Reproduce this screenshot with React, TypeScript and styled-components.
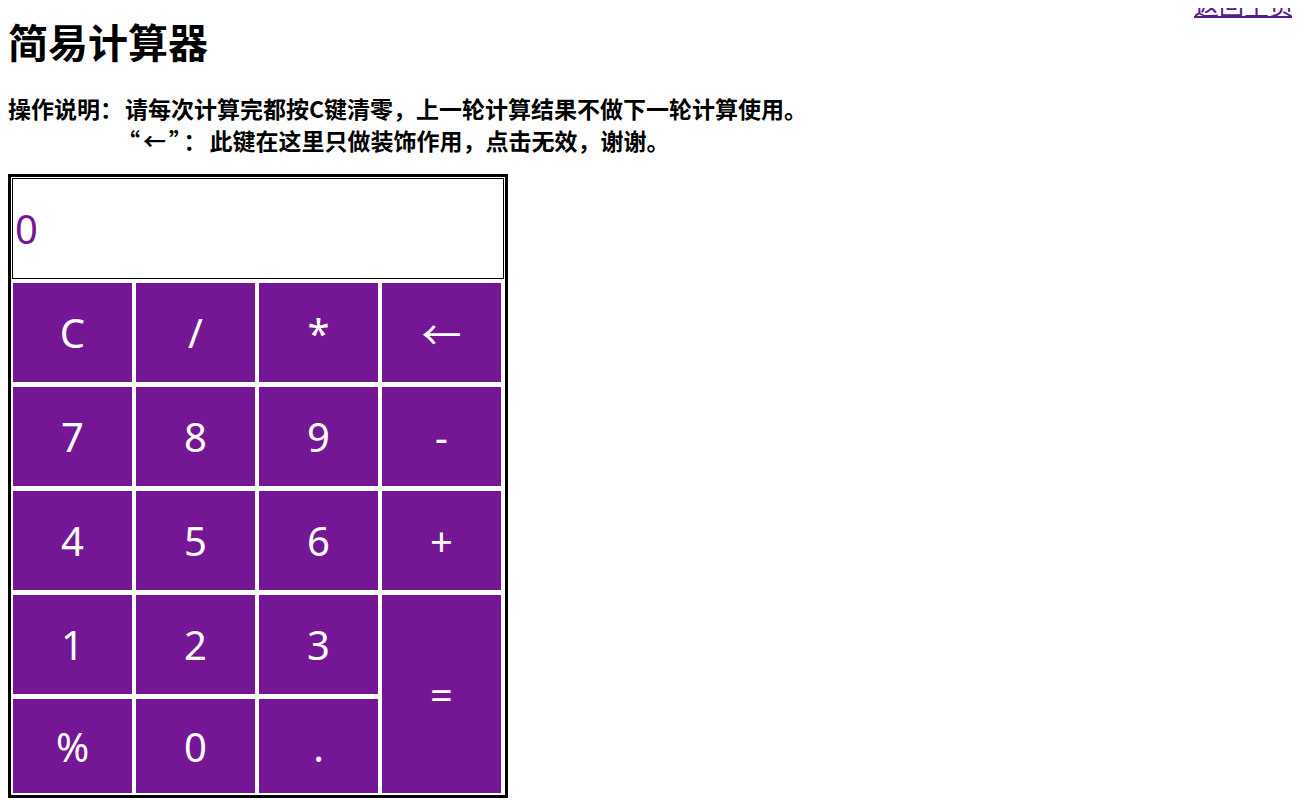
import React from "react";
import styled, { createGlobalStyle } from "styled-components";

const GlobalStyle = createGlobalStyle`
  body {
    margin: 8px;
    font-family: "Noto Sans", "Noto Sans CJK SC", sans-serif;
    background: #ffffff;
    color: #000000;
  }
`;

const purple = "#751795";

const TopBar = styled.div`
  display: flex;
  justify-content: flex-end;
  height: 0;
`;

const HomeLink = styled.a`
  margin-top: -16px;
  margin-right: -2px;
  font-size: 25px;
  line-height: 25px;
  color: #551a8b;
  text-decoration: underline;
  text-underline-offset: 1px;
  font-family: "Noto Sans CJK SC", sans-serif;
`;

const Title = styled.h1`
  margin: 13px 0 0;
  font-size: 40px;
  line-height: 40px;
  font-weight: 700;
  font-family: "Noto Sans CJK SC", sans-serif;
`;

const Notes = styled.div`
  display: flex;
  margin-top: 31px;
  font-size: 23px;
  line-height: 32px;
  font-weight: 700;
  font-family: "Noto Sans CJK SC", sans-serif;
`;

const NoteLabel = styled.div`
  width: 117px;
  flex: none;
`;

const NoteLines = styled.div`
  display: flex;
  flex-direction: column;
`;

const Quote = styled.span`
  margin-left: -8px;
  letter-spacing: 3px;
`;

const Calculator = styled.div`
  margin-top: 18px;
  width: 494px;
  border: 3px solid #000;
  padding: 1px 0 2px 0;
`;

const Display = styled.div`
  box-sizing: border-box;
  width: 492px;
  margin-left: 1px;
  height: 101px;
  border: 1px solid #000;
  display: flex;
  align-items: center;
  padding-left: 2px;
  font-size: 40px;
  color: ${purple};
`;

const Keys = styled.div`
  display: grid;
  margin: 4px 0 0 2px;
  grid-template-columns: repeat(4, 119px);
  grid-template-rows: 99px 99px 99px 99px 94px;
  column-gap: 4px;
  row-gap: 5px;
`;

const Key = styled.div<{ $tall?: boolean }>`
  background: ${purple};
  color: #fff;
  display: flex;
  align-items: center;
  justify-content: center;
  font-size: 40px;
  cursor: pointer;
  ${(p) => (p.$tall ? "grid-column: 4; grid-row: 4 / span 2;" : "")}
`;

const keys = ["C", "/", "*", "←", "7", "8", "9", "-", "4", "5", "6", "+", "1", "2", "3"];
const lastRow = ["%", "0", "."];

export default function App() {
  return (
    <>
      <GlobalStyle />
      <TopBar>
        <HomeLink href="#">返回主页</HomeLink>
      </TopBar>
      <Title>简易计算器</Title>
      <Notes>
        <NoteLabel>操作说明：</NoteLabel>
        <NoteLines>
          <span>请每次计算完都按C键清零，上一轮计算结果不做下一轮计算使用。</span>
          <span>
            <Quote>“←”：</Quote>此键在这里只做装饰作用，点击无效，谢谢。
          </span>
        </NoteLines>
      </Notes>
      <Calculator>
        <Display>0</Display>
        <Keys>
          {keys.map((k) => (
            <Key key={k}>{k}</Key>
          ))}
          <Key $tall>=</Key>
          {lastRow.map((k) => (
            <Key key={k}>{k}</Key>
          ))}
        </Keys>
      </Calculator>
    </>
  );
}
